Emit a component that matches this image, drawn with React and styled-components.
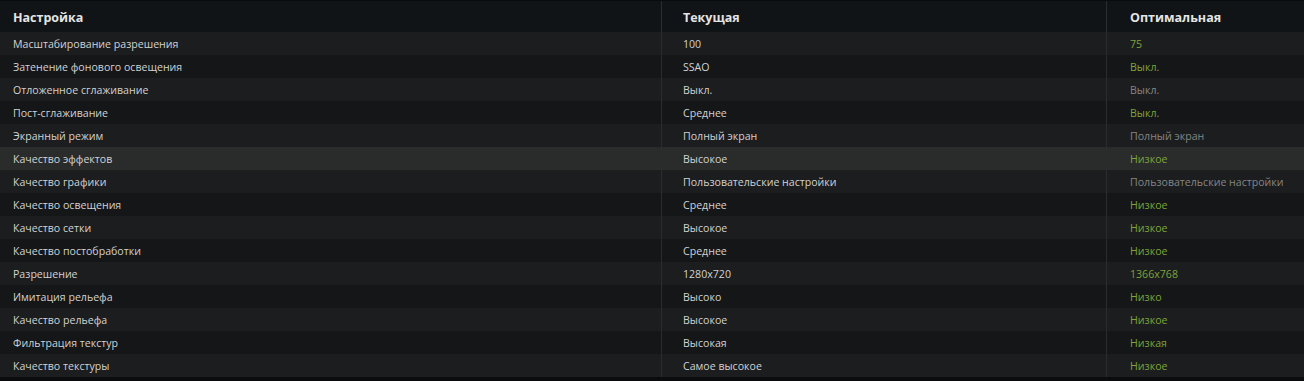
import React from 'react';
import styled, { createGlobalStyle } from 'styled-components';

const GlobalStyle = createGlobalStyle`
  html, body {
    margin: 0;
    padding: 0;
    background: #111315;
  }
  body {
    font-family: 'Open Sans', 'Noto Sans', sans-serif;
  }
`;

const settings = [
  { name: 'Масштабирование разрешения', current: '100', optimal: '75', changed: true },
  { name: 'Затенение фонового освещения', current: 'SSAO', optimal: 'Выкл.', changed: true },
  { name: 'Отложенное сглаживание', current: 'Выкл.', optimal: 'Выкл.', changed: false },
  { name: 'Пост-сглаживание', current: 'Среднее', optimal: 'Выкл.', changed: true },
  { name: 'Экранный режим', current: 'Полный экран', optimal: 'Полный экран', changed: false },
  { name: 'Качество эффектов', current: 'Высокое', optimal: 'Низкое', changed: true, hover: true },
  { name: 'Качество графики', current: 'Пользовательские настройки', optimal: 'Пользовательские настройки', changed: false },
  { name: 'Качество освещения', current: 'Среднее', optimal: 'Низкое', changed: true },
  { name: 'Качество сетки', current: 'Высокое', optimal: 'Низкое', changed: true },
  { name: 'Качество постобработки', current: 'Среднее', optimal: 'Низкое', changed: true },
  { name: 'Разрешение', current: '1280x720', optimal: '1366x768', changed: true },
  { name: 'Имитация рельефа', current: 'Высоко', optimal: 'Низко', changed: true },
  { name: 'Качество рельефа', current: 'Высокое', optimal: 'Низкое', changed: true },
  { name: 'Фильтрация текстур', current: 'Высокая', optimal: 'Низкая', changed: true },
  { name: 'Качество текстуры', current: 'Самое высокое', optimal: 'Низкое', changed: true },
];

export default function App() {
  return (
    <>
      <GlobalStyle />
      <Table>
        <HeaderRow>
          <HeadCell>Настройка</HeadCell>
          <HeadCell col={2}>Текущая</HeadCell>
          <HeadCell col={3}>Оптимальная</HeadCell>
        </HeaderRow>
        {settings.map((s, i) => (
          <Row key={s.name} odd={i % 2 === 0} hover={s.hover}>
            <Cell>{s.name}</Cell>
            <Cell col={2}>{s.current}</Cell>
            <Cell col={3} tone={s.changed ? 'green' : 'gray'}>{s.optimal}</Cell>
          </Row>
        ))}
        <Footer />
      </Table>
    </>
  );
}

const Table = styled.div`
  width: 1304px;
  display: flex;
  flex-direction: column;
  background: #111315;
`;

const gridCols = `
  display: grid;
  grid-template-columns: 662px 445px 1fr;
`;

const HeaderRow = styled.div`
  ${gridCols}
  height: 32px;
  background: #111416;
  border-top: 1px solid #0a0b0c;
  box-sizing: border-box;
`;

const pad = (col) => (col === 2 ? '21px' : col === 3 ? '23px' : '13px');

const HeadCell = styled.div`
  display: flex;
  align-items: center;
  padding-left: ${(p) => pad(p.col)};
  padding-top: 2px;
  font-size: 12.5px;
  font-weight: 700;
  color: #e4e4e4;
  border-left: ${(p) => (p.col ? '1px solid #2a2d30' : 'none')};
  margin-left: ${(p) => (p.col ? '-1px' : '0')};
`;

const Row = styled.div`
  ${gridCols}
  height: 23px;
  background: ${(p) => (p.hover ? '#2a2b2b' : p.odd ? '#1c1d1e' : '#141618')};
`;

const toneColor = { green: '#7ea43a', gray: '#858585' };

const Cell = styled.div`
  display: flex;
  align-items: center;
  padding-left: ${(p) => pad(p.col)};
  font-size: 10.6px;
  color: ${(p) => (p.tone ? toneColor[p.tone] : '#d2d2d2')};
  white-space: nowrap;
  border-left: ${(p) => (p.col ? '1px solid #2a2d30' : 'none')};
  margin-left: ${(p) => (p.col ? '-1px' : '0')};
`;

const Footer = styled.div`
  height: 4px;
  background: #0b0c0d;
  border-bottom: 1px solid #2a2c2e;
`;
